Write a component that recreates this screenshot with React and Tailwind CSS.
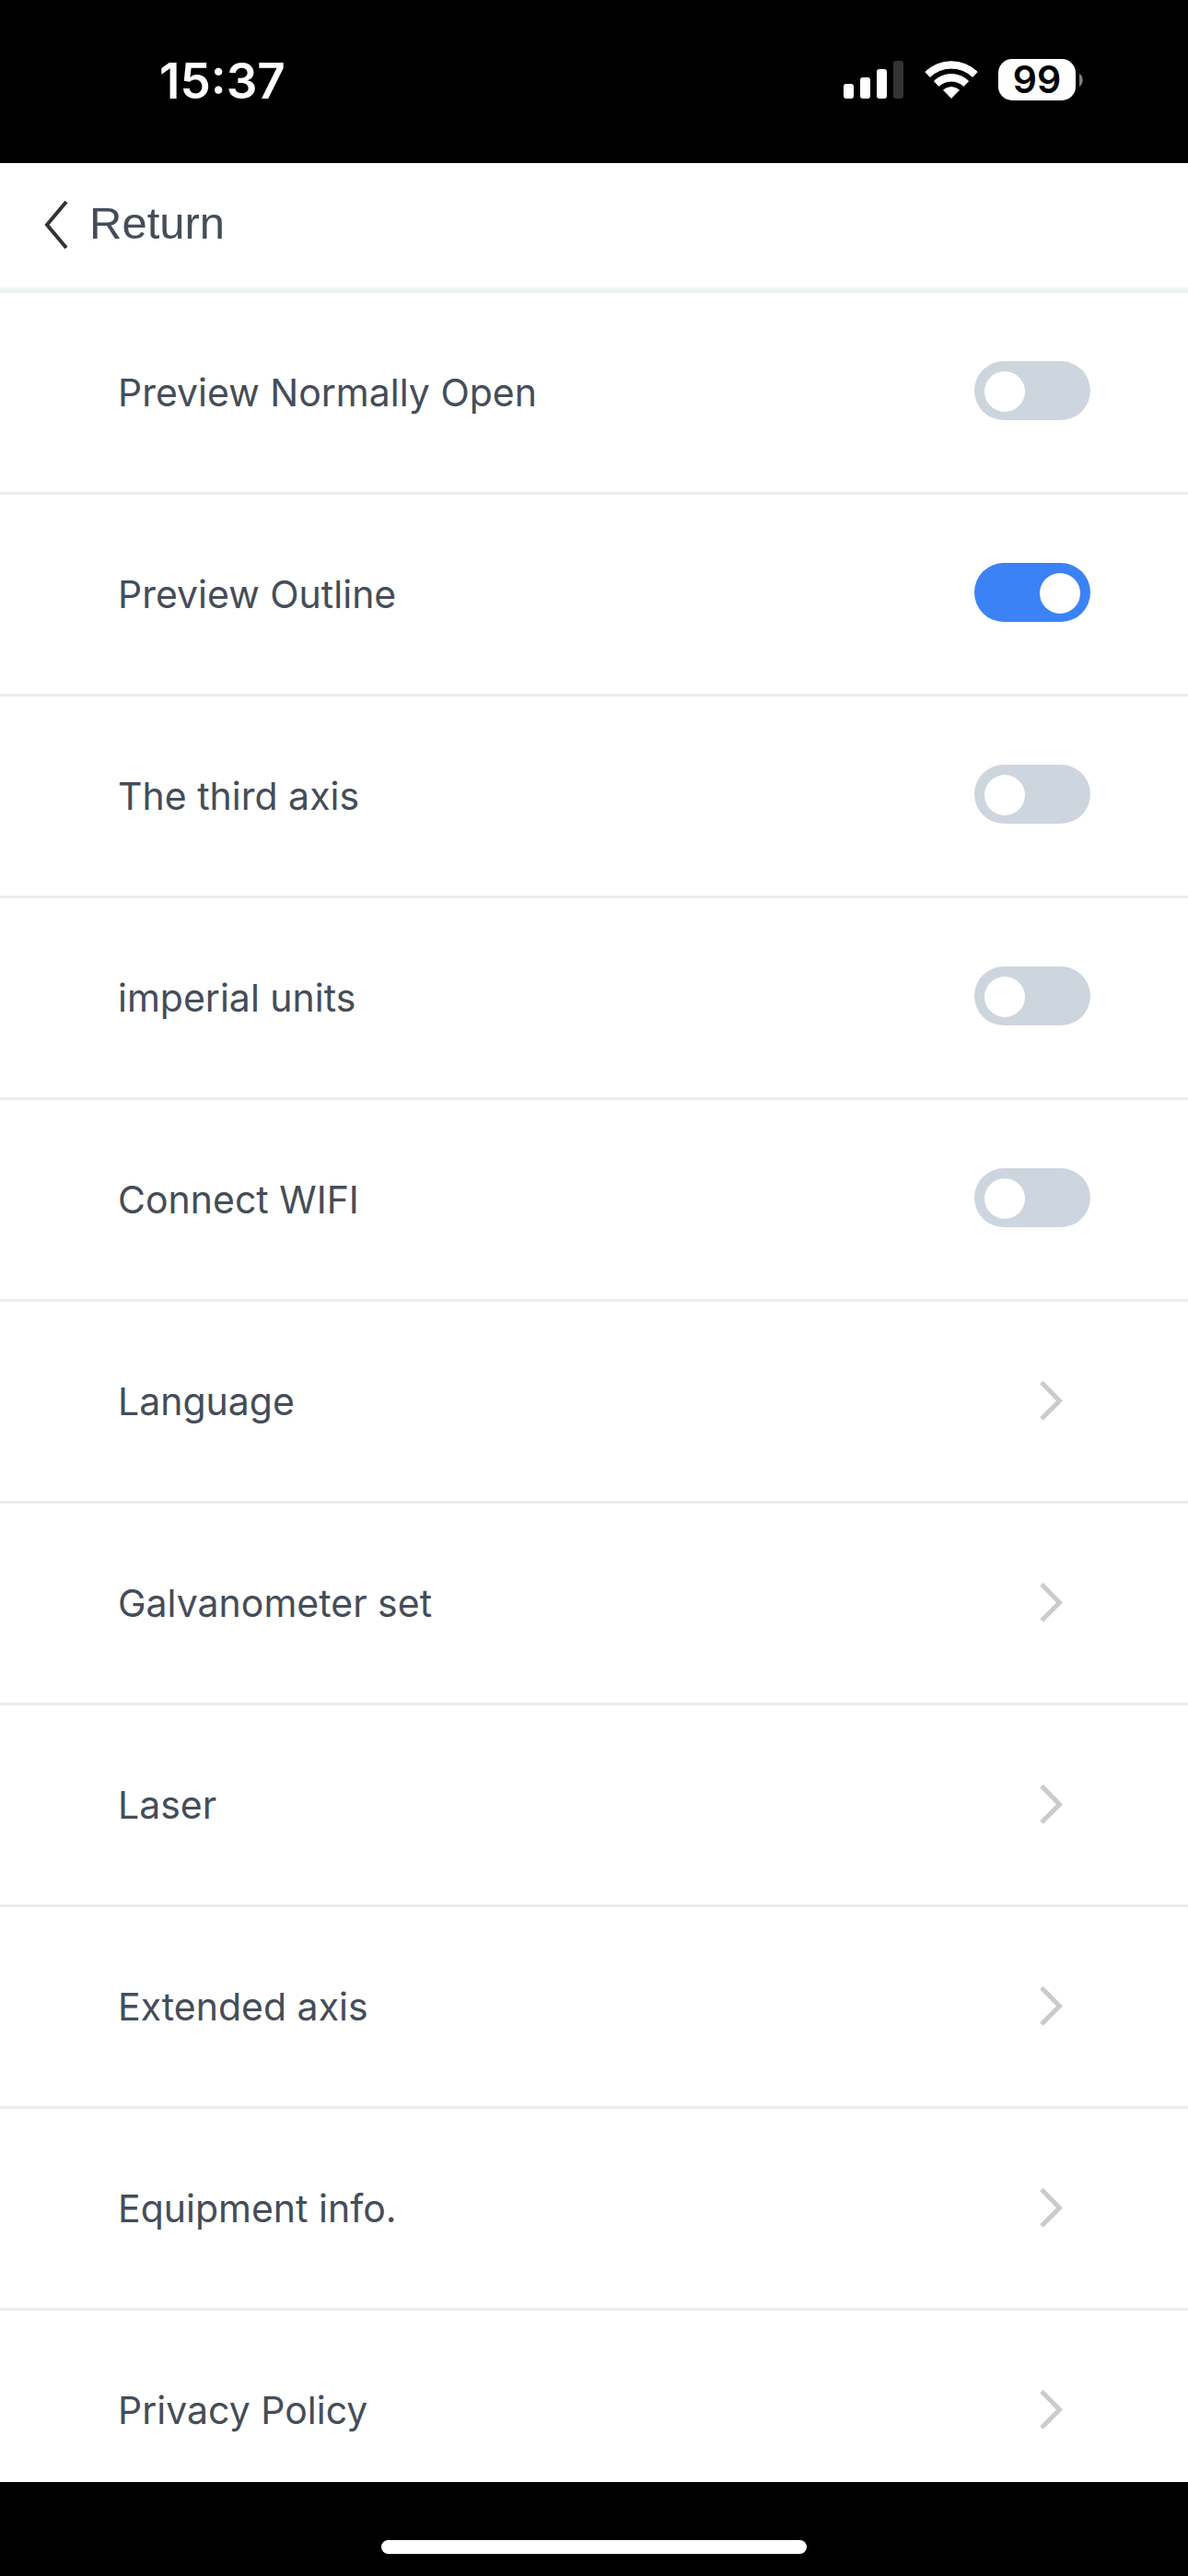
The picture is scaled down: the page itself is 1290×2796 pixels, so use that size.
import { useState } from "react";

const TOGGLES = [
  { id: "preview-open", label: "Preview Normally Open", on: false },
  { id: "preview-outline", label: "Preview Outline", on: true },
  { id: "third-axis", label: "The third axis", on: false },
  { id: "imperial", label: "imperial units", on: false },
  { id: "wifi", label: "Connect WIFI", on: false },
];

const LINKS = [
  "Language",
  "Galvanometer set",
  "Laser",
  "Extended axis",
  "Equipment info.",
  "Privacy Policy",
];

function StatusBar() {
  return (
    <div className="flex h-[177px] shrink-0 items-start justify-between bg-black pt-16 pr-28 pl-[173px] text-white">
      <span className="font-['Inter',sans-serif] text-[53px] leading-[48px] font-semibold">15:37</span>
      <div className="flex h-[45px] items-center">
        <svg className="h-[45px] w-[65px]" viewBox="0 0 65 45" fill="currentColor" aria-label="Signal">
          <rect x="0" y="27" width="11" height="16" rx="3" />
          <rect x="18" y="20" width="11" height="23" rx="3" />
          <rect x="36" y="11" width="11" height="32" rx="3" />
          <rect x="54" y="2" width="11" height="41" rx="3" fill="#333333" />
        </svg>
        <svg className="ml-[23px] h-[45px] w-[58px]" viewBox="0 0 58 45" fill="currentColor" aria-label="Wi-Fi">
          <path d="M0.8 14 A41 41 0 0 1 57.2 14 L52.2 19.4 A33.5 33.5 0 0 0 5.8 19.4 Z" stroke="currentColor" strokeWidth="1" strokeLinejoin="round" />
          <path d="M10.4 24 A27 27 0 0 1 47.6 24 L42.4 29.4 A19.5 19.5 0 0 0 15.6 29.4 Z" stroke="currentColor" strokeWidth="1" strokeLinejoin="round" />
          <path d="M20.5 33.8 A13 13 0 0 1 37.5 33.8 L29 42.4 Z" stroke="currentColor" strokeWidth="1" strokeLinejoin="round" />
        </svg>
        <div className="ml-[22px] flex h-[45px] w-[84px] items-center justify-center rounded-[15px] bg-white font-['Inter',sans-serif] text-[41px] leading-[45px] font-semibold text-black">
          99
        </div>
        <svg className="ml-1 h-[14px] w-[6px]" viewBox="0 0 6 14" fill="#808080" aria-hidden="true">
          <path d="M0 0 A8.5 8.5 0 0 1 0 14 Z" />
        </svg>
      </div>
    </div>
  );
}

function ToggleRow({ id, label, initial }) {
  const [on, setOn] = useState(initial);
  return (
    <li className="flex h-[219px] shrink-0 items-center justify-between border-b-[3px] border-[#ececec] pr-[106px] pb-1 pl-32">
      <label htmlFor={id} className="pt-1">{label}</label>
      <input
        id={id}
        type="checkbox"
        role="switch"
        checked={on}
        onChange={(e) => setOn(e.target.checked)}
        className="flex h-16 w-[126px] shrink-0 appearance-none items-center rounded-full bg-[#cdd5df] px-[11px] pt-[2px] before:size-11 before:rounded-full before:bg-white before:content-[''] checked:justify-end checked:bg-[#3b82f6]"
      />
    </li>
  );
}

function LinkRow({ label }) {
  return (
    <li className="h-[219px] shrink-0 border-b-[3px] border-[#ececec]">
      <button type="button" className="flex h-full w-full items-center justify-between pr-[135px] pl-32 text-left">
        {label}
        <svg className="h-[44px] w-[28px]" viewBox="0 0 28 44" fill="none" stroke="#cbcbcb" strokeWidth="5" aria-hidden="true">
          <path d="M4 1.5 L23.5 21.5 L4 41" />
        </svg>
      </button>
    </li>
  );
}

export default function App() {
  return (
    <div className="flex h-screen flex-col overflow-hidden bg-white text-[#454d58]">
      <StatusBar />
      <header className="flex h-[141px] shrink-0 items-start border-b-[6px] border-[#eef2f3] pt-9 pl-12">
        <button type="button" className="flex h-[60px] items-center gap-[21px] font-['Liberation_Sans',sans-serif] text-[49px] leading-[58px]">
          <svg className="h-[54px] w-7" viewBox="0 0 28 54" fill="none" stroke="#333333" strokeWidth="4" aria-hidden="true">
            <path d="M24 3 L3 28 L24 53" />
          </svg>
          <span className="pb-[2px]">Return</span>
        </button>
      </header>
      <ul className="flex min-h-0 flex-1 flex-col overflow-hidden font-['Inter',sans-serif] text-[41px] leading-[60px]">
        {TOGGLES.map((t) => (
          <ToggleRow key={t.id} id={t.id} label={t.label} initial={t.on} />
        ))}
        {LINKS.map((label) => (
          <LinkRow key={label} label={label} />
        ))}
      </ul>
      <footer className="flex h-[102px] shrink-0 items-end justify-center bg-black pb-6">
        <div className="h-[15px] w-[462px] rounded-full bg-white" />
      </footer>
    </div>
  );
}
